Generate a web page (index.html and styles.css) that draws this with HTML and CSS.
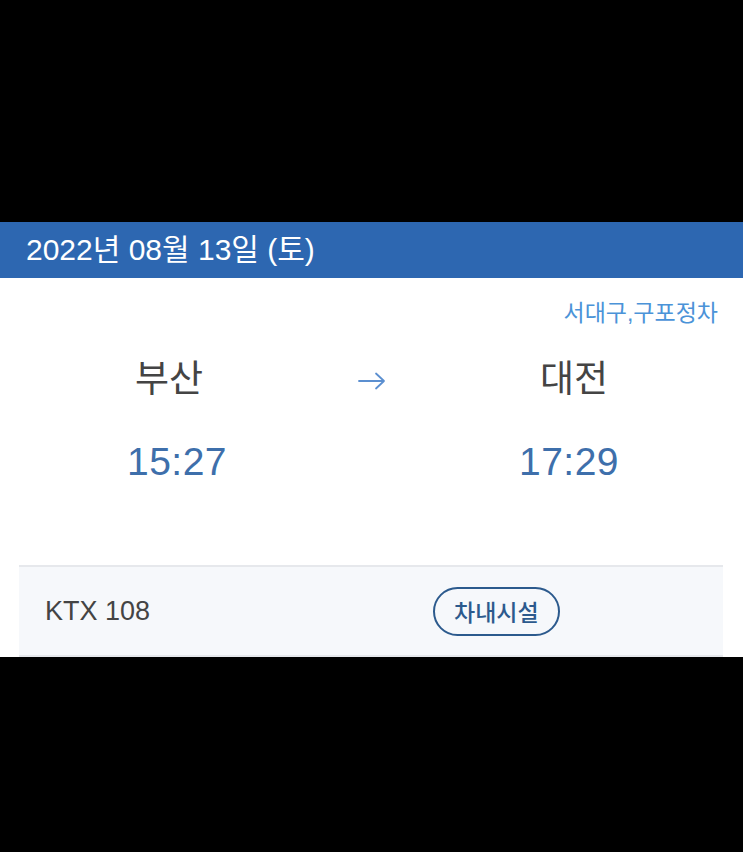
FILE: index.html
```html
<!DOCTYPE html>
<html lang="ko">
<head>
<meta charset="utf-8">
<title>승차권 정보</title>
<link rel="stylesheet" href="styles.css">
</head>
<body>
<div class="screen">
  <section class="ticket">
    <header class="ticket-date">2022년 08월 13일 (토)</header>
    <p class="stops">서대구,구포정차</p>
    <div class="route">
      <div class="station">부산</div>
      <div class="arrow">
        <svg width="28" height="18" viewBox="0 0 28 18" aria-hidden="true">
          <path d="M1 9 H26 M18 1.5 L26 9 L18 16.5" fill="none" stroke="#5b8fd0" stroke-width="1.8" stroke-linecap="round" stroke-linejoin="round"/>
        </svg>
      </div>
      <div class="station">대전</div>
    </div>
    <div class="times">
      <div class="time time-dep">15:27</div>
      <div></div>
      <div class="time time-arr">17:29</div>
    </div>
    <div class="train">
      <span class="train-no">KTX 108</span>
      <button class="facility">차내시설</button>
    </div>
  </section>
</div>
</body>
</html>
```

FILE: styles.css
```css
html, body {
  margin: 0;
  padding: 0;
  background: #000;
}

body {
  font-family: "Liberation Sans", "Noto Sans CJK KR", sans-serif;
}

.screen {
  width: 743px;
  height: 852px;
  padding-top: 222px;
  box-sizing: border-box;
}

.ticket {
  background: #fff;
  height: 435px;
  overflow: hidden;
  display: flex;
  flex-direction: column;
}

.ticket-date {
  height: 56px;
  background: #2d67b1;
  color: #fff;
  font-size: 30px;
  line-height: 56px;
  padding-left: 26px;
  flex: none;
}

.stops {
  margin: 22px 25px 0 0;
  text-align: right;
  color: #4b93d8;
  font-size: 23px;
  line-height: 26px;
}

.route,
.times {
  display: grid;
  grid-template-columns: 338px 1fr 338px;
  align-items: center;
}

.route {
  margin-top: 34px;
  height: 40px;
}

.station {
  text-align: center;
  color: #444;
  font-size: 37px;
  line-height: 40px;
}

.arrow {
  display: flex;
  justify-content: center;
  padding-top: 2px;
}

.times {
  margin-top: 42px;
  height: 40px;
}

.time {
  text-align: center;
  color: #3e6fab;
  font-size: 39px;
  line-height: 40px;
  letter-spacing: 0.5px;
}

.time-dep {
  padding-left: 16px;
}

.time-arr {
  padding-right: 10px;
}

.train {
  margin: 83px 20px 0 19px;
  height: 92px;
  box-sizing: border-box;
  background: #f6f8fb;
  border-top: 2px solid #e6e8ec;
  border-bottom: 2px solid #e6e8ec;
  display: grid;
  grid-template-columns: 414px auto;
  align-items: center;
  justify-items: start;
  flex: none;
}

.train-no {
  padding-left: 26px;
  color: #444;
  font-size: 27px;
}

.facility {
  height: 49px;
  padding: 0 19px;
  border: 2px solid #2c5a8d;
  border-radius: 25px;
  background: transparent;
  color: #2c5a8d;
  font-family: "Noto Sans CJK KR", sans-serif;
  font-size: 23px;
  font-weight: 500;
  line-height: 1;
}
```
